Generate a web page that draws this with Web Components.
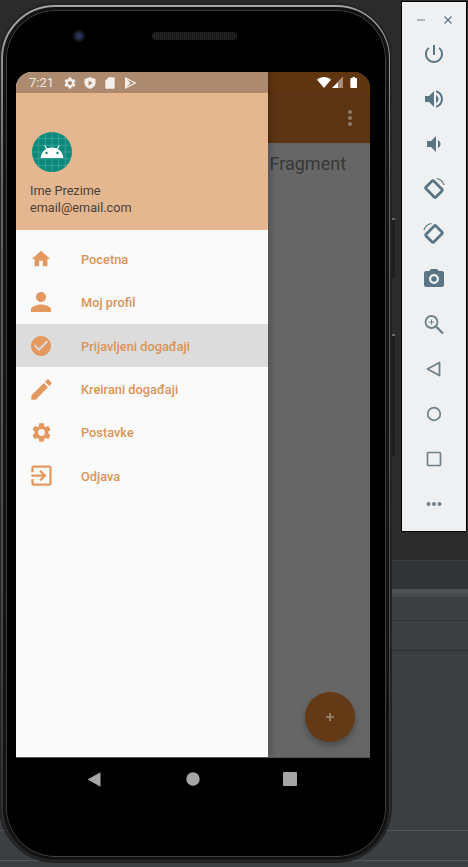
<!DOCTYPE html>
<html>
<head>
<meta charset="utf-8">
<title>Emulator</title>
<style>
  html, body { margin: 0; padding: 0; height: 100%; background: #3c3f41; overflow: hidden; }
  body { font-family: Roboto, "Noto Sans", sans-serif; }
</style>
</head>
<body>
<emu-desktop>
  <emu-phone>
    <status-bar slot="status"></status-bar>
    <nav-drawer slot="drawer" name="Ime Prezime" email="email@email.com">
      <drawer-item icon="home" size="22" label="Pocetna"></drawer-item>
      <drawer-item icon="person" size="30" label="Moj profil"></drawer-item>
      <drawer-item icon="check" size="24" label="Prijavljeni događaji" selected></drawer-item>
      <drawer-item icon="edit" size="27" label="Kreirani događaji"></drawer-item>
      <drawer-item icon="gear" size="23" label="Postavke"></drawer-item>
      <drawer-item icon="exit" size="27" label="Odjava"></drawer-item>
    </nav-drawer>
  </emu-phone>
  <emu-toolbar></emu-toolbar>
</emu-desktop>

<script>
  const ICONS = {
    home: 'M10 20v-6h4v6h5v-8h3L12 3 2 12h3v8z',
    person: 'M12 12c2.21 0 4-1.79 4-4s-1.79-4-4-4-4 1.79-4 4 1.79 4 4 4zm0 2c-2.67 0-8 1.34-8 4v2h16v-2c0-2.66-5.33-4-8-4z',
    check: 'M12 2C6.48 2 2 6.48 2 12s4.48 10 10 10 10-4.48 10-10S17.52 2 12 2zm-2 15l-5-5 1.41-1.41L10 14.17l7.59-7.59L19 8l-9 9z',
    edit: 'M3 17.25V21h3.75L17.81 9.94l-3.75-3.75L3 17.25zM20.71 7.04c.39-.39.39-1.02 0-1.41l-2.34-2.34c-.39-.39-1.02-.39-1.41 0l-1.83 1.83 3.75 3.75 1.83-1.83z',
    gear: 'M19.14 12.94c.04-.3.06-.61.06-.94 0-.32-.02-.64-.07-.94l2.03-1.58c.18-.14.23-.41.12-.61l-1.92-3.32c-.12-.22-.37-.29-.59-.22l-2.39.96c-.5-.38-1.03-.7-1.62-.94l-.36-2.54c-.04-.24-.24-.41-.48-.41h-3.84c-.24 0-.43.17-.47.41l-.36 2.54c-.59.24-1.13.57-1.62.94l-2.39-.96c-.22-.08-.47 0-.59.22L2.74 8.87c-.12.21-.08.47.12.61l2.03 1.58c-.05.3-.09.63-.09.94s.02.64.07.94l-2.03 1.58c-.18.14-.23.41-.12.61l1.92 3.32c.12.22.37.29.59.22l2.39-.96c.5.38 1.03.7 1.62.94l.36 2.54c.05.24.24.41.48.41h3.84c.24 0 .44-.17.47-.41l.36-2.54c.59-.24 1.13-.56 1.62-.94l2.39.96c.22.08.47 0 .59-.22l1.92-3.32c.12-.22.07-.47-.12-.61l-2.01-1.58zM12 15.6c-1.98 0-3.6-1.62-3.6-3.6s1.62-3.6 3.6-3.6 3.6 1.62 3.6 3.6-1.62 3.6-3.6 3.6z',
    exit: 'M10.09 15.59L11.5 17l5-5-5-5-1.41 1.41L12.67 11H3v2h9.67l-2.58 2.59zM19 3H5c-1.11 0-2 .9-2 2v4h2V5h14v14H5v-4H3v4c0 1.1.89 2 2 2h14c1.1 0 2-.9 2-2V5c0-1.1-.9-2-2-2z'
  };

  class EmuDesktop extends HTMLElement {
    connectedCallback() {
      const shadow = this.attachShadow({ mode: 'open' });
      shadow.innerHTML = `
        <style>
          :host { display: block; position: relative; width: 468px; height: 867px; overflow: hidden; background: #3c3f41; }
          .bands { display: flex; flex-direction: column; height: 100%; }
          .bands div { flex: none; box-sizing: border-box; }
          .top { height: 560px; background: #2b2b2b; }
          .tabs { height: 29px; background: #323334; border-top: 1px solid #3b3c3d; }
          .split { height: 8px; background: linear-gradient(#515355, #45484a); }
          .row { border-bottom: 1px solid #2f3234; }
          .low { border-bottom: 1px solid #55585a; }
        </style>
        <div class="bands">
          <div class="top"></div>
          <div class="tabs"></div>
          <div class="split"></div>
          <div class="row" style="height:24px"></div>
          <div class="row" style="height:30px"></div>
          <div class="low" style="height:180px"></div>
          <div class="low" style="height:30px"></div>
        </div>
        <slot></slot>
      `;
    }
  }

  class EmuPhone extends HTMLElement {
    connectedCallback() {
      const shadow = this.attachShadow({ mode: 'open' });
      shadow.innerHTML = `
        <style>
          :host { display: block; position: absolute; left: -1px; top: 3px; width: 393px; height: 860px; }
          .body {
            box-sizing: border-box; height: 100%; border-radius: 56px; padding: 1.5px;
            border: 2px solid #232325; background: linear-gradient(#a4a5a7, #5f6163 22%, #48494b 70%, #2a2a2c);
          }
          .inner {
            box-sizing: border-box; height: 100%; border-radius: 52px; background: #000;
            border: 3px solid #131314; box-shadow: inset 0 0 0 1px #3d3e40;
            padding: 62.5px 15px 0 10.5px; display: flex; flex-direction: column; position: relative;
          }
          .key { position: absolute; left: 393px; width: 3px; background: #1f1f20; border-top: 2px solid #6b6c6e; }
          .sensor { position: absolute; top: 20.5px; left: 67.5px; width: 12px; height: 12px; border-radius: 50%;
                    background: radial-gradient(circle, #2a3358 0 25%, #14151c 55%, #1d1d20 100%); }
          .speaker { position: absolute; top: 22.5px; left: 146.5px; width: 85px; height: 8px; border-radius: 4px;
                     background: repeating-linear-gradient(90deg, #232323 0 1px, #171717 1px 2px); }
          .screen { position: relative; width: 354px; height: 685px; border-radius: 16px 16px 0 0; overflow: hidden;
                    display: flex; flex-direction: column; background: #666; flex: none; }
          .sb-bg { height: 21px; background: #5f3510; flex: none; }
          .appbar { height: 50px; background: #5a3413; flex: none; display: flex; align-items: center; justify-content: flex-end; padding-right: 18px; }
          .dots { display: flex; flex-direction: column; gap: 2px; }
          .dots i { width: 4px; height: 4px; border-radius: 50%; background: #8b7a6a; display: block; }
          .content { flex: 1; position: relative; padding: 9px 0 0 253.5px; background: #666;
                     font: 400 18px/24px Roboto, sans-serif; color: #383838; }
          .fab { position: absolute; right: 15px; bottom: 15px; width: 50px; height: 50px; border-radius: 50%;
                 background: #643a16; box-shadow: 0 4px 6px rgba(0,0,0,.25);
                 display: flex; align-items: center; justify-content: center; }
          .drawer-wrap { position: absolute; left: 0; top: 0; bottom: 0; width: 252px; box-shadow: 3px 0 6px rgba(0,0,0,.2); }
          ::slotted(status-bar) { position: absolute; left: 0; right: 0; top: 0; }
          .nav { display: flex; align-items: center; height: 43px; padding-left: 71px; width: 354px; box-sizing: border-box; border-top: 1px solid #555; flex: none; }
          .nav svg { display: block; }
        </style>
        <div class="key" style="top:215px;height:58px"></div>
        <div class="key" style="top:331px;height:120px"></div>
        <div class="body">
          <div class="inner">
            <div class="sensor"></div>
            <div class="speaker"></div>
            <div class="screen">
              <div class="sb-bg"></div>
              <div class="appbar"><div class="dots"><i></i><i></i><i></i></div></div>
              <div class="content">
                Fragment
                <div class="fab">
                  <svg width="8" height="8" viewBox="0 0 9 9"><path d="M3.6 0h1.8v3.600H9v1.800H5.400V9H3.600V5.400H0V3.600h3.600z" fill="#a08a78"/></svg>
                </div>
              </div>
              <div class="drawer-wrap"><slot name="drawer"></slot></div>
              <slot name="status"></slot>
            </div>
            <div class="nav">
              <svg width="14" height="15" viewBox="0 0 14 15"><path d="M13.500.3v14.400L.5 7.500z" fill="#a6a6a6"/></svg>
              <svg style="margin-left:85px" width="14" height="14" viewBox="0 0 14 14"><circle cx="7" cy="7" r="6.700" fill="#a6a6a6"/></svg>
              <svg style="margin-left:83px" width="14" height="14" viewBox="0 0 14 14"><rect width="14" height="14" rx="1" fill="#a6a6a6"/></svg>
            </div>
          </div>
        </div>
      `;
    }
  }

  class StatusBar extends HTMLElement {
    connectedCallback() {
      const shadow = this.attachShadow({ mode: 'open' });
      shadow.innerHTML = `
        <style>
          :host { display: flex; height: 21px; align-items: center; padding: 0 13px 0 13px; box-sizing: border-box;
                  font: 400 13px/21px Roboto, sans-serif; color: #f1e9e2; }
          .left { display: flex; align-items: center; flex: 1; gap: 6px; }
          .time { width: 27.500px; }
          .right { display: flex; align-items: center; }
          svg { display: block; }
        </style>
        <div class="left">
          <span class="time">7:21</span>
          <svg width="14" height="14" viewBox="0 0 24 24"><path fill="#f4eee8" d="${ICONS.gear}"/></svg>
          <svg width="14" height="14" viewBox="0 0 24 24"><path fill="#f4eee8" fill-rule="evenodd" d="M12 2l9.500 3v6.500C21.500 16.500 17.500 20.500 12 22 6.500 20.500 2.500 16.500 2.500 11.500V5zM9.500 7.500v9l7-4.500z"/></svg>
          <svg width="14" height="14" viewBox="0 0 24 24"><path fill="#f4eee8" d="M10 2h8c1.100 0 2 .9 2 2v16c0 1.100-.9 2-2 2H6c-1.100 0-2-.9-2-2V8z"/></svg>
          <svg width="14" height="14" viewBox="0 0 24 24"><path fill="none" stroke="#f4eee8" stroke-width="2.200" d="M4.500 3.500v17L21 12z"/><path fill="#f4eee8" d="M4.500 3.500L13 12l-8.500 8.500z"/></svg>
        </div>
        <div class="right">
          <svg width="14" height="11" viewBox="0 0 14 11"><path fill="#fff" d="M0 2.800C1.900 1 4.300 0 7 0s5.100 1 7 2.800L7 11z"/></svg>
          <svg style="margin-left:1.500px" width="11" height="11" viewBox="0 0 11 11"><path fill="#fff" d="M11 0v11H0z"/><path fill="#a98a72" d="M6 5v6h5V0z"/></svg>
          <svg style="margin-left:6.500px" width="7.500" height="11" viewBox="0 0 8 13"><path fill="#fff" d="M2.500 0h3v1.200H7c.5 0 1 .4 1 1V12c0 .6-.5 1-1 1H1c-.5 0-1-.4-1-1V2.200c0-.6.500-1 1-1h1.500z"/></svg>
        </div>
      `;
    }
  }

  class NavDrawer extends HTMLElement {
    connectedCallback() {
      const shadow = this.attachShadow({ mode: 'open' });
      const name = this.getAttribute('name') || '';
      const email = this.getAttribute('email') || '';
      let grid = '';
      for (let i = 1; i < 6; i++) {
        const p = i * 6.67;
        grid += `<path d="M${p} 0V40M0 ${p}H40" stroke="#fff" stroke-opacity=".28" stroke-width=".6"/>`;
      }
      shadow.innerHTML = `
        <style>
          :host { display: flex; flex-direction: column; height: 100%; background: #fafafa; }
          .sb { height: 21px; background: #ab8a6f; flex: none; }
          header { height: 137px; box-sizing: border-box; background: #e4b791; padding: 39px 0 0 14px; flex: none;
                   color: #4c4036; font: 400 12.700px/17px Roboto, sans-serif; }
          .avatar { display: block; margin: 0 0 10px 2px; }
          .items { padding-top: 7.500px; display: flex; flex-direction: column; }
        </style>
        <div class="sb"></div>
        <header>
          <svg class="avatar" width="40" height="40" viewBox="0 0 40 40">
            <clipPath id="c"><circle cx="20" cy="20" r="20"/></clipPath>
            <g clip-path="url(#c)">
              <rect width="40" height="40" fill="#0b8a7c"/>
              ${grid}
              <path fill="#fff" d="M8.500 26c.4-4 2.500-7.300 5.800-9.100l-2.100-3.500.8-.5 2.200 3.600c1.500-.7 3.100-1 4.800-1s3.300.3 4.800 1l2.200-3.600.8.5-2.100 3.500c3.300 1.800 5.400 5.100 5.800 9.100z"/>
              <circle cx="14.500" cy="21" r="1.200" fill="#0b8a7c"/>
              <circle cx="25.500" cy="21" r="1.200" fill="#0b8a7c"/>
            </g>
          </svg>
          <div>${name}<br>${email}</div>
        </header>
        <div class="items"><slot></slot></div>
      `;
    }
  }

  class DrawerItem extends HTMLElement {
    connectedCallback() {
      const shadow = this.attachShadow({ mode: 'open' });
      const size = this.getAttribute('size') || 24;
      const d = ICONS[this.getAttribute('icon')] || '';
      shadow.innerHTML = `
        <style>
          :host { display: flex; align-items: center; height: 43.300px; padding-left: 10px; box-sizing: border-box;
                  font: 500 12.800px/20px Roboto, sans-serif; color: #db9358; }
          :host([selected]) { background: #dcdcdc; }
          .ic { width: 30px; height: 30px; display: flex; align-items: center; justify-content: center; margin-right: 25px; flex: none; }
          span { padding-top: 2px; }
          svg { display: block; }
        </style>
        <div class="ic"><svg width="${size}" height="${size}" viewBox="0 0 24 24"><path fill="#e2985e" d="${d}"/></svg></div>
        <span>${this.getAttribute('label') || ''}</span>
      `;
    }
  }

  class EmuToolbar extends HTMLElement {
    connectedCallback() {
      const shadow = this.attachShadow({ mode: 'open' });
      const c = '#5a7684', g = '#6f818b';
      shadow.innerHTML = `
        <style>
          :host { display: flex; flex-direction: column; align-items: center; position: absolute; left: 401px; top: 1px; width: 66px; height: 531px;
                  box-sizing: border-box; background: #eff0f1; border: 1px solid #000; padding-top: 9px; }
          .win { display: flex; gap: 19px; height: 18px; align-items: center; margin-bottom: 2px; }
          .btn { height: 45px; display: flex; align-items: center; justify-content: center; flex: none; }
          svg { display: block; }
        </style>
        <div class="win">
          <svg width="8" height="8" viewBox="0 0 8 8"><path d="M0 4h8" stroke="#8a979e" stroke-width="1.300"/></svg>
          <svg width="8" height="8" viewBox="0 0 8 8"><path d="M.5.500l7 7m0-7l-7 7" stroke="${c}" stroke-width="1.200"/></svg>
        </div>
        <div class="btn"><svg width="24" height="24" viewBox="0 0 24 24"><path fill="${c}" d="M13 3h-2v10h2V3zm4.830 2.170l-1.420 1.420C17.990 7.860 19 9.810 19 12c0 3.870-3.130 7-7 7s-7-3.130-7-7c0-2.190 1.010-4.140 2.580-5.420L6.170 5.170C4.230 6.820 3 9.260 3 12c0 4.970 4.030 9 9 9s9-4.030 9-9c0-2.740-1.230-5.180-3.170-6.830z"/></svg></div>
        <div class="btn"><svg width="24" height="24" viewBox="0 0 24 24"><path fill="${c}" d="M3 9v6h4l5 5V4L7 9H3zm13.500 3c0-1.770-1.020-3.290-2.500-4.030v8.050c1.480-.73 2.500-2.250 2.500-4.020zM14 3.230v2.060c2.890.86 5 3.540 5 6.710s-2.110 5.850-5 6.710v2.060c4.010-.91 7-4.490 7-8.770s-2.990-7.860-7-8.770z"/></svg></div>
        <div class="btn"><svg width="24" height="24" viewBox="0 0 24 24"><path fill="${c}" d="M18.500 12c0-1.770-1.020-3.290-2.500-4.030v8.050c1.480-.73 2.500-2.250 2.500-4.020zM5 9v6h4l5 5V4L9 9H5z"/></svg></div>
        <div class="btn"><svg width="24" height="24" viewBox="0 0 24 24" fill="none" stroke="${c}"><rect x="5" y="6.500" width="14" height="11" rx="1.200" stroke-width="2.800" transform="rotate(45 12 12)"/><path d="M14.500 1.500c3.500.5 6.500 3 7.500 6.500" stroke-width="1.200"/></svg></div>
        <div class="btn"><svg width="24" height="24" viewBox="0 0 24 24" fill="none" stroke="${c}"><rect x="5" y="6.500" width="14" height="11" rx="1.200" stroke-width="2.800" transform="rotate(-45 12 12)"/><path d="M2 8C3 4.500 6 2 9.500 1.500" stroke-width="1.200"/></svg></div>
        <div class="btn"><svg width="24" height="24" viewBox="0 0 24 24"><path fill="${c}" fill-rule="evenodd" d="M20 4h-3.170L15 2H9L7.170 4H4c-1.100 0-2 .9-2 2v12c0 1.100.9 2 2 2h16c1.100 0 2-.9 2-2V6c0-1.100-.9-2-2-2zm-8 13a5 5 0 1 1 0-10 5 5 0 0 1 0 10zm0-2.200a2.800 2.800 0 1 0 0-5.600 2.800 2.800 0 0 0 0 5.600z"/></svg></div>
        <div class="btn"><svg width="24" height="24" viewBox="0 0 24 24" fill="none" stroke="${g}"><circle cx="9.500" cy="10" r="6" stroke-width="1.800"/><path d="M14 14.500l7 7" stroke-width="2.400"/><path d="M7 10h5M9.500 7.500v5" stroke-width="1"/></svg></div>
        <div class="btn"><svg width="24" height="24" viewBox="0 0 24 24"><path fill="none" stroke="${g}" stroke-width="1.800" stroke-linejoin="round" d="M17.500 5.500v13L5.500 12z"/></svg></div>
        <div class="btn"><svg width="24" height="24" viewBox="0 0 24 24"><circle cx="12" cy="12" r="6.300" fill="none" stroke="${g}" stroke-width="1.700"/></svg></div>
        <div class="btn"><svg width="24" height="24" viewBox="0 0 24 24"><rect x="5.500" y="5.500" width="13" height="13" rx="1" fill="none" stroke="${g}" stroke-width="1.700"/></svg></div>
        <div class="btn"><svg width="24" height="24" viewBox="0 0 24 24"><g fill="${g}"><circle cx="6.500" cy="12" r="2"/><circle cx="12" cy="12" r="2"/><circle cx="17.500" cy="12" r="2"/></g></svg></div>
      `;
    }
  }

  customElements.define('emu-desktop', EmuDesktop);
  customElements.define('emu-phone', EmuPhone);
  customElements.define('status-bar', StatusBar);
  customElements.define('nav-drawer', NavDrawer);
  customElements.define('drawer-item', DrawerItem);
  customElements.define('emu-toolbar', EmuToolbar);
</script>
</body>
</html>
